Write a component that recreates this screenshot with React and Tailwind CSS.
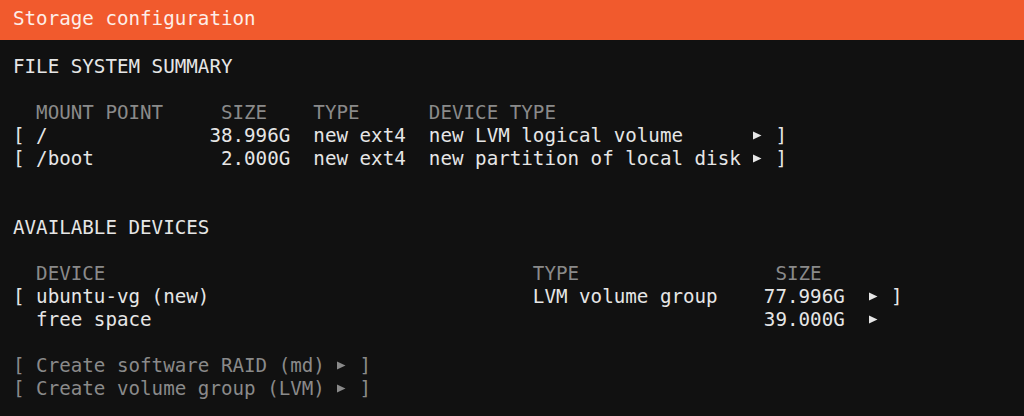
import React from "react";

const Line = ({ children, className = "" }) => (
  <div className={"h-[23px] leading-[23px] whitespace-pre " + className}>{children}</div>
);

const Dim = ({ children }) => <span className="text-[#8a8a8a]">{children}</span>;

const Tri = () => (
  <span className="inline-flex w-[1ch] h-[23px] items-center align-top">
    <svg width="9" height="9" viewBox="0 0 9 9" className="ml-[1px]">
      <path d="M0 0.5 L8.5 4.5 L0 8.5 Z" fill="currentColor" />
    </svg>
  </span>
);

export default function App() {
  return (
    <div
      className="w-[1024px] h-[416px] bg-[#111111] text-[#e6e6e6] overflow-hidden"
      style={{ fontFamily: '"DejaVu Sans Mono", "Liberation Mono", monospace' }}
    >
      <header className="h-[40px] bg-[#f15a2d] pl-[13px] pt-[7px] text-[19.2px] leading-[23px] text-[#fdeee8] whitespace-pre">
        Storage configuration
      </header>
      <main className="pl-[13px] pt-[15px] text-[19.2px]">
        <section className="flex flex-col">
          <Line>FILE SYSTEM SUMMARY</Line>
          <Line> </Line>
          <Line><Dim>{"  MOUNT POINT     SIZE    TYPE      DEVICE TYPE"}</Dim></Line>
          <Line>{"[ /              38.996G  new ext4  new LVM logical volume      "}<Tri />{" ]"}</Line>
          <Line>{"[ /boot           2.000G  new ext4  new partition of local disk "}<Tri />{" ]"}</Line>
          <Line> </Line>
          <Line> </Line>
        </section>
        <section className="flex flex-col">
          <Line>AVAILABLE DEVICES</Line>
          <Line> </Line>
          <Line><Dim>{"  DEVICE                                     TYPE                 SIZE"}</Dim></Line>
          <Line>{"[ ubuntu-vg (new)                            LVM volume group    77.996G  "}<Tri />{" ]"}</Line>
          <Line>{"  free space                                                     39.000G  "}<Tri /></Line>
          <Line> </Line>
          <Line><Dim>{"[ Create software RAID (md) "}<Tri />{" ]"}</Dim></Line>
          <Line><Dim>{"[ Create volume group (LVM) "}<Tri />{" ]"}</Dim></Line>
        </section>
      </main>
    </div>
  );
}
